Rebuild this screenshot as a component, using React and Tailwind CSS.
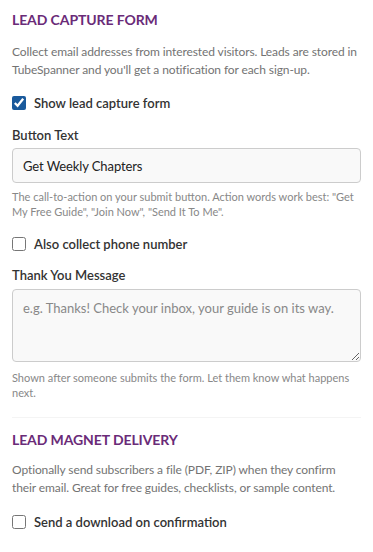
import React from 'react';

const font = { fontFamily: 'Lato, "Open Sans", sans-serif' };

function Checkbox({ label, checked }) {
  return (
    <label className="flex items-center gap-2 text-[13px] font-semibold text-[#333] leading-[18px]">
      <input
        type="checkbox"
        defaultChecked={checked}
        className="w-[14px] h-[14px] m-0 accent-[#1a5a9c]"
      />
      <span>{label}</span>
    </label>
  );
}

function SectionHeading({ children }) {
  return <h3 className="text-[14px] font-bold uppercase tracking-[-0.1px] text-[#6a2b78] leading-[18px]">{children}</h3>;
}

export default function App() {
  return (
    <div className="w-[373px] h-[552px] bg-white px-3 pt-[11px] overflow-hidden" style={font}>
      <SectionHeading>Lead Capture Form</SectionHeading>
      <p className="mt-[14px] text-[12px] tracking-[-0.1px] leading-[18px] text-[#737373]">
        Collect email addresses from interested visitors. Leads are stored in TubeSpanner and you'll get a notification for each sign-up.
      </p>

      <div className="mt-[15px]">
        <Checkbox label="Show lead capture form" checked />
      </div>

      <div className="mt-[14px]">
        <div className="text-[13px] font-semibold text-[#333] leading-[18px]">Button Text</div>
        <input
          type="text"
          defaultValue="Get Weekly Chapters"
          className="mt-[4px] block w-full h-[35px] px-[10px] rounded-[4px] border border-[#ccc] bg-[#f9f9f9] text-[13px] tracking-[-0.1px] text-[#222] outline-none"
        />
        <p className="mt-[6px] text-[11px] leading-[15px] text-[#888]">
          The call-to-action on your submit button. Action words work best: "Get My Free Guide", "Join Now", "Send It To Me".
        </p>
      </div>

      <div className="mt-[16px]">
        <Checkbox label="Also collect phone number" />
      </div>

      <div className="mt-[13px]">
        <div className="text-[13px] font-semibold text-[#333] leading-[18px]">Thank You Message</div>
        <textarea
          placeholder="e.g. Thanks! Check your inbox, your guide is on its way."
          rows={3}
          className="mt-[5px] block w-full h-[73px] px-[10px] py-[8px] rounded-[4px] border border-[#ccc] bg-[#f9f9f9] text-[13px] leading-[20px] text-[#222] placeholder:text-[#888] outline-none resize-y"
        />
        <p className="mt-[8px] text-[11px] leading-[15px] text-[#888]">
          Shown after someone submits the form. Let them know what happens next.
        </p>
      </div>

      <div className="mt-[17px] border-t border-[#f4f4f4] pt-[13px]">
        <SectionHeading>Lead Magnet Delivery</SectionHeading>
        <p className="mt-[12px] text-[12px] tracking-[-0.1px] leading-[18px] text-[#737373]">
          Optionally send subscribers a file (PDF, ZIP) when they confirm their email. Great for free guides, checklists, or sample content.
        </p>
        <div className="mt-[16px]">
          <Checkbox label="Send a download on confirmation" />
        </div>
      </div>
    </div>
  );
}
